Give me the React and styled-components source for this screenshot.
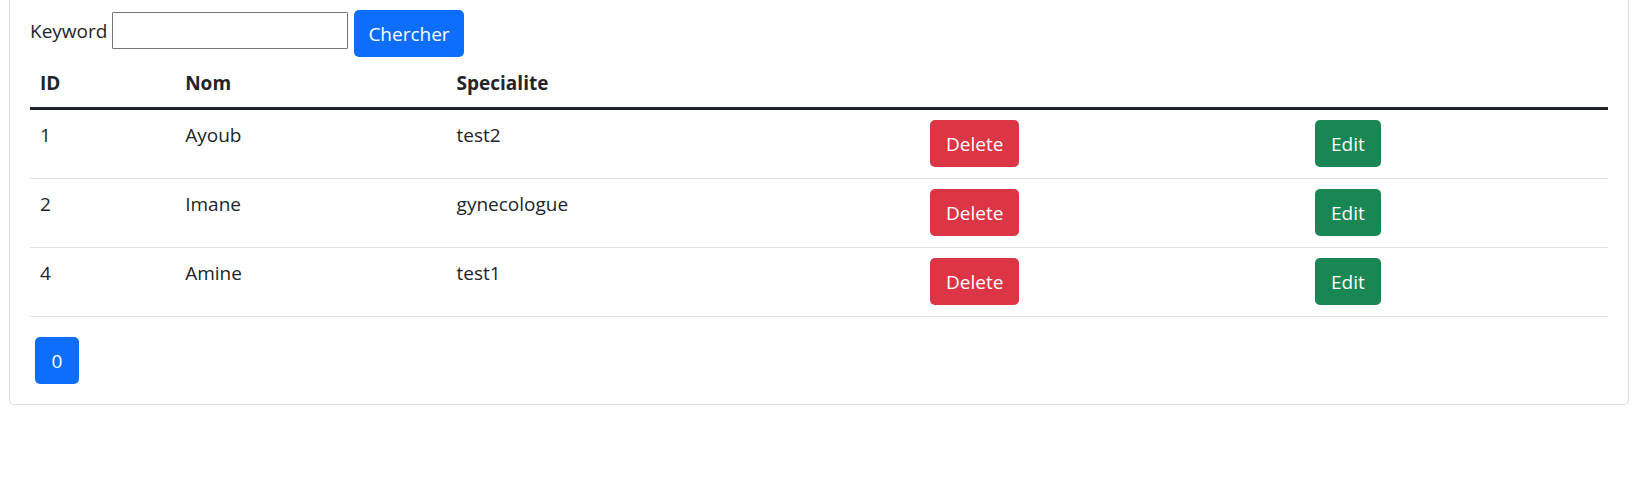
import React, { useState } from "react";
import styled, { createGlobalStyle } from "styled-components";

const GlobalStyle = createGlobalStyle`
  *, *::before, *::after { box-sizing: border-box; }
  body {
    margin: 0;
    background: #fff;
    color: #212529;
    font-family: "Segoe UI", "Open Sans", "Noto Sans", sans-serif;
    font-size: 19px;
    line-height: 30px;
  }
  button, input { font: inherit; }
`;

const Card = styled.main`
  margin: 0 4px 0 9px;
  padding: 10px 20px 20px;
  border: 1px solid #dfdfdf;
  border-top: 0;
  border-radius: 0 0 5px 5px;
`;

const SearchForm = styled.form`
  display: flex;
  align-items: flex-start;
  gap: 6px;
`;

const Field = styled.div`
  display: flex;
  align-items: center;
  gap: 5px;
  padding-top: 2px;
`;

const SearchInput = styled.input`
  width: 236px;
  height: 37px;
  padding: 1px 2px;
  border: 1px solid #767676;
  border-radius: 1px;
  background: #fff;
  color: inherit;
`;

const colors = { primary: "#0d6efd", danger: "#dc3545", success: "#198754" };

const Button = styled.button`
  display: block;
  min-width: 44px;
  height: 47px;
  padding: 0 ${({ $compact }) => ($compact ? 14 : 16)}px;
  border: 0;
  border-radius: 5px;
  background: ${({ $variant }) => colors[$variant]};
  color: #fff;
  cursor: pointer;
`;

const Table = styled.table`
  width: 100%;
  margin-bottom: 20px;
  border-collapse: separate;
  border-spacing: 0;
  table-layout: fixed;
`;

const Column = styled.col`
  width: ${({ $share }) => $share}%;
`;

const HeadCell = styled.th`
  height: 53px;
  padding: 11px 10px 9px;
  border-bottom: 3px solid #212529;
  text-align: left;
  vertical-align: top;
  font-weight: 700;
`;

const Cell = styled.td`
  padding: 10px 10px 11px;
  border-bottom: 1px solid #dee2e6;
  vertical-align: top;
`;

const Pages = styled.nav`
  display: flex;
  padding-left: 5px;
`;

const doctors = [
  { id: 1, nom: "Ayoub", specialite: "test2" },
  { id: 2, nom: "Imane", specialite: "gynecologue" },
  { id: 4, nom: "Amine", specialite: "test1" },
];

export default function App() {
  const [keyword, setKeyword] = useState("");
  return (
    <>
      <GlobalStyle />
      <Card>
        <SearchForm onSubmit={(e) => e.preventDefault()}>
          <Field>
            <label htmlFor="keyword">Keyword</label>
            <SearchInput
              id="keyword"
              type="text"
              value={keyword}
              onChange={(e) => setKeyword(e.target.value)}
            />
          </Field>
          <Button type="submit" $variant="primary" $compact>Chercher</Button>
        </SearchForm>
        <Table>
          <colgroup>
            <Column $share={9.2} />
            <Column $share={17.2} />
            <Column $share={30} />
            <Column $share={24.4} />
            <Column $share={19.2} />
          </colgroup>
          <thead>
            <tr>
              <HeadCell scope="col">ID</HeadCell>
              <HeadCell scope="col">Nom</HeadCell>
              <HeadCell scope="col">Specialite</HeadCell>
              <HeadCell as="td" />
              <HeadCell as="td" />
            </tr>
          </thead>
          <tbody>
            {doctors.map((d) => (
              <tr key={d.id}>
                <Cell>{d.id}</Cell>
                <Cell>{d.nom}</Cell>
                <Cell>{d.specialite}</Cell>
                <Cell><Button type="button" $variant="danger">Delete</Button></Cell>
                <Cell><Button type="button" $variant="success">Edit</Button></Cell>
              </tr>
            ))}
          </tbody>
        </Table>
        <Pages>
          <Button type="button" $variant="primary">0</Button>
        </Pages>
      </Card>
    </>
  );
}
